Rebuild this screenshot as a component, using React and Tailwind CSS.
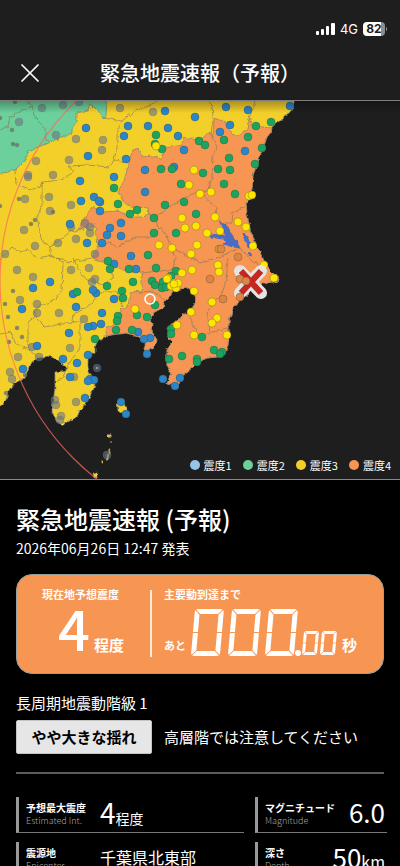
const LAND =
  "M-5 95 L293 95 L293 108 L289 113 L284 116 L283 119 L278 122 L272 127 L271 132 L267 137 L263 148 L258 162 L253 175 L252 188 L250 198 L246 203 L247 215 L250 228 L255 242 L262 257 L268 268 L275 275 L279 278 L278 283 L272 281 L263 283 L253 290 L240 300 L233 308 L229 320 L229 333 L228 345 L225 353 L217 357 L207 358 L198 362 L192 368 L185 373 L180 382 L177 387 L172 385 L167 384 L171 373 L167 367 L167 357 L167 350 L172 343 L168 337 L167 328 L173 323 L180 318 L187 312 L193 307 L197 300 L192 290 L185 287 L180 290 L173 290 L170 297 L165 302 L162 308 L153 313 L150 320 L153 325 L152 332 L157 340 L155 347 L150 348 L147 354 L144 349 L146 342 L138 337 L127 333 L110 335 L98 340 L95 347 L95 353 L88 358 L88 368 L95 385 L92 393 L87 402 L80 410 L77 417 L70 420 L63 425 L57 422 L52 413 L53 402 L55 388 L55 372 L67 370 L62 363 L55 358 L47 356 L38 358 L32 362 L28 370 L25 378 L18 382 L12 385 L8 392 L6 400 L-5 410 Z";

const GREEN_AREA =
  "M-5 95 L107 95 L106 118 L104 118 L97 110 L90 103 L88 110 L77 113 L77 123 L72 127 L72 133 L50 142 L43 145 L28 152 L25 160 L15 170 L-5 175 Z";

const ORANGE_AREA =
  "M133 150 L138 148 L143 157 L150 155 L157 157 L162 160 L165 148 L182 145 L183 137 L192 139 L200 140 L210 132 L213 137 L214 118 L225 122 L230 132 L237 137 L247 130 L249 118 L252 125 L262 127 L272 128 L271 132 L267 137 L263 148 L258 162 L253 175 L252 188 L250 198 L246 203 L247 215 L250 228 L255 242 L262 257 L268 268 L275 275 L279 278 L278 283 L272 281 L263 283 L253 290 L240 300 L233 308 L229 320 L229 333 L228 345 L225 353 L217 357 L207 358 L198 362 L192 368 L185 373 L180 382 L177 387 L172 385 L167 384 L171 373 L167 367 L167 350 L172 343 L168 337 L167 328 L173 323 L180 318 L187 312 L193 307 L197 300 L192 290 L185 287 L180 290 L173 290 L170 297 L165 302 L162 308 L153 313 L150 320 L153 325 L152 332 L157 340 L155 347 L150 348 L147 354 L144 349 L146 342 L138 337 L127 333 L110 335 L105 336 L107 327 L118 322 L120 310 L128 305 L130 295 L133 291 L142 292 L142 273 L130 272 L113 266 L103 262 L92 258 L97 248 L95 225 L87 228 L78 229 L85 218 L92 207 L103 212 L118 211 L130 217 L143 217 L149 215 L148 208 L133 207 L125 203 L118 192 L125 178 L128 165 Z";

const BORDERS = [
  "M0 130 L8 126 L10 117 L22 110 L32 107 L35 118 L45 128 L46 140 L50 142",
  "M32 107 L28 101",
  "M104 118 L122 121 L118 130 L118 142 L114 160 L128 162",
  "M122 121 L133 112 L150 105 L157 101",
  "M114 160 L110 167 L87 165 L68 166 L73 172 L62 180 L42 182 L40 187 L30 190 L16 185 L15 170",
  "M42 182 L42 205 L37 218 L42 242 L50 247 L70 232 L87 228",
  "M50 247 L50 256 L70 262 L92 258",
  "M0 260 L12 247 L20 252 L28 250 L37 258 L52 255 L63 262 L62 290 L55 300 L36 308 L35 317 L28 322 L28 348 L38 357",
  "M35 317 L45 327 L72 322 L80 322 L80 348 L68 365 L63 377 L55 382",
  "M72 322 L73 315 L90 305 L100 292 L117 292 L122 307",
  "M73 258 L80 272 L87 280 L103 285 L113 278 L108 266",
  "M0 334 L12 332 L15 343 L28 350",
  "M97 248 L110 243 L117 247 L137 237 L155 237 L158 228 L155 217 L148 213",
  "M155 217 L163 212 L180 200 L200 190 L207 192 L212 178 L213 155 L217 147 L211 135 L213 118 L212 105 L208 101",
  "M200 190 L210 203 L217 208 L215 218 L223 223 L232 223 L233 212 L246 207",
  "M158 228 L163 230 L170 243 L177 250 L185 255 L200 262 L217 258 L230 252 L240 248 L253 262 L267 270",
  "M170 243 L175 258 L173 270 L158 271 L142 273",
  "M228 257 L226 282 L222 293 L207 312 L210 333 L227 328 L230 333",
  "M190 317 L200 340 L210 333",
  "M140 292 L153 291 L165 300",
  "M249 118 L253 108 L255 101",
];

const BLUE = [
  [86, 128], [88, 156], [165, 111], [195, 117], [128, 126], [148, 126], [168, 128], [124, 136], [178, 136],
  [126, 159], [184, 150], [145, 170], [174, 167], [114, 177], [145, 192], [80, 181], [94, 197], [81, 201],
  [100, 202], [99, 201], [100, 211], [70, 224], [121, 223], [110, 228], [107, 235], [121, 236], [102, 243],
  [87, 243], [131, 256], [114, 264], [136, 269], [50, 282], [33, 288], [226, 107], [248, 110], [290, 106],
  [230, 125], [220, 132], [245, 151], [22, 309], [69, 333], [37, 346], [63, 359], [23, 369], [76, 307],
  [73, 294], [96, 293], [93, 290], [114, 299], [102, 313], [101, 324], [93, 326], [88, 327], [88, 355],
  [77, 363], [70, 377], [90, 379], [94, 380], [88, 381], [85, 398], [121, 402], [126, 414], [138, 332],
  [150, 338], [144, 339], [147, 354], [163, 379], [180, 378], [175, 386],
];

const GREEN = [
  [156, 135], [155, 144], [162, 149], [199, 141], [161, 169], [172, 169], [181, 184], [114, 188], [118, 204],
  [130, 214], [137, 210], [154, 218], [184, 202], [165, 205], [196, 214], [154, 233], [176, 233], [148, 255],
  [108, 261], [110, 269], [129, 269], [156, 268], [176, 271], [133, 282], [107, 286], [122, 291], [152, 281],
  [155, 285], [77, 292], [163, 285], [163, 282], [162, 288], [166, 287], [171, 276], [256, 126], [271, 122],
  [248, 137], [224, 140], [205, 145], [262, 148], [229, 158], [255, 164], [218, 169], [230, 170], [203, 173],
  [224, 184], [235, 194], [123, 298], [118, 316], [117, 321], [116, 330], [95, 339], [132, 330], [137, 315],
  [147, 317], [155, 305], [171, 329], [171, 334], [182, 356], [169, 359], [197, 359], [197, 362], [202, 337],
  [214, 350], [222, 352], [220, 354],
];

const YELLOW = [
  [156, 146], [194, 170], [189, 185], [200, 194], [182, 218], [185, 228], [196, 226], [159, 245], [172, 248],
  [197, 245], [191, 254], [192, 270], [182, 273], [168, 278], [171, 286], [176, 288], [174, 283], [178, 283],
  [167, 279], [174, 284], [194, 291], [211, 192], [249, 196], [252, 195], [215, 217], [238, 222], [246, 227],
  [220, 231], [207, 233], [253, 246], [264, 265], [274, 278], [218, 265], [219, 272], [135, 309], [191, 312],
  [177, 325], [212, 302], [217, 318], [212, 323], [194, 335], [227, 335],
];

const GRAY = [
  [42, 108], [63, 105], [79, 102], [120, 108], [153, 112], [19, 122], [56, 135], [76, 139], [103, 140],
  [102, 150], [36, 161], [69, 160], [28, 175], [28, 177], [53, 175], [49, 197], [25, 199], [50, 211],
  [71, 205], [24, 230], [71, 227], [85, 223], [90, 227], [90, 233], [76, 239], [58, 243], [35, 246],
  [95, 254], [5, 254], [17, 270], [33, 277], [71, 270], [89, 268], [95, 279], [92, 282], [20, 300],
  [37, 304], [37, 313], [59, 313], [84, 319], [32, 347], [39, 357], [70, 348], [18, 357], [10, 372],
  [12, 379], [74, 377], [55, 400], [56, 405], [76, 402], [61, 416], [60, 420], [107, 455],
];

const SMALL_GRAY = [
  [12, 130], [13, 144], [17, 145], [15, 102], [0, 118], [19, 199], [31, 224], [35, 220], [53, 212], [13, 291],
  [0, 206], [5, 304], [8, 317], [17, 328], [22, 337], [9, 342], [25, 375], [6, 393],
];

const ORANGE = [[221, 249], [210, 279], [238, 257], [240, 279], [246, 281], [240, 297], [223, 299]];

const LEGEND = [
  { label: "震度1", color: "bg-[#96c3e8]" },
  { label: "震度2", color: "bg-[#6bd09b]" },
  { label: "震度3", color: "bg-[#f3cf2a]" },
  { label: "震度4", color: "bg-[#f79552]" },
];

function Dots({ points, fill, r = 4, opacity = 1, stroke = "#3a4030" }) {
  return (
    <g fill={fill} fillOpacity={opacity} stroke={stroke} strokeOpacity={0.5} strokeWidth={0.6}>
      {points.map(([x, y], i) => (
        <circle key={i} cx={x} cy={y} r={r} />
      ))}
    </g>
  );
}

function StatusBar() {
  return (
    <div className="flex items-center justify-end gap-[5px] pr-[13px] pt-[19px]">
      <svg width="19" height="12" viewBox="0 0 19 12" fill="#fff" aria-hidden="true">
        <rect x="0" y="8" width="3" height="4" rx="1" />
        <rect x="5" y="6" width="3" height="6" rx="1" />
        <rect x="10" y="3" width="3" height="9" rx="1" />
        <rect x="15" y="0" width="4" height="12" rx="1" />
      </svg>
      <span className="font-['Inter',sans-serif] text-[13px] leading-5 text-white">4G</span>
      <span className="flex items-center gap-px">
        <span className="h-[14px] w-[22px] rounded-[4px] bg-[linear-gradient(90deg,#fff_82%,#8e8e8e_82%)] text-center font-['Inter',sans-serif] text-[12px] font-bold leading-[14px] text-[#1e1e1e]">
          82
        </span>
        <span className="h-1 w-px rounded-r bg-[#8e8e8e]" />
      </span>
    </div>
  );
}

function QuakeMap() {
  return (
    <svg viewBox="0 101 400 378" className="block w-full" role="img" aria-label="震度マップ">
      <defs>
        {/* roughens coast and borders */}
        <filter id="rough" x="-5%" y="-5%" width="110%" height="110%" colorInterpolationFilters="sRGB">
          <feTurbulence type="fractalNoise" baseFrequency="0.2" numOctaves="2" seed="4" />
          <feDisplacementMap in="SourceGraphic" scale="4" xChannelSelector="R" yChannelSelector="G" />
        </filter>
        <linearGradient id="shade" x1="0" y1="0" x2="0" y2="1">
          <stop offset="0" stopColor="#000" stopOpacity="0.3" />
          <stop offset="1" stopColor="#000" stopOpacity="0" />
        </linearGradient>
      </defs>
      <rect y="101" width="400" height="378" fill="#1e1e1e" />

      <g filter="url(#rough)" strokeLinejoin="round">
        <path d={LAND} fill="#f3cf2a" stroke="#8b8676" strokeWidth="0.8" />
        <path d={GREEN_AREA} fill="#6bd09b" stroke="#7d8a6c" strokeWidth="0.8" />
        <path d={ORANGE_AREA} fill="#f79552" stroke="#9a8468" strokeWidth="0.8" />
        <path
          d="M211 234 L226 236 L222 226 L219 221 L227 226 L232 234 L240 248 L233 247 L223 244 L227 240 L212 237 Z M243 232 L247 237 L252 248 L249 248 L244 238 Z"
          fill="#4a6cc4"
          stroke="#4a6cc4"
        />
        <circle cx="250" cy="254" r="2" fill="#4a6cc4" />
        <g fill="none" stroke="#8a7a58" strokeOpacity="0.85" strokeWidth="0.8">
          {BORDERS.map((d) => (
            <path key={d} d={d} />
          ))}
        </g>
        <g fill="#f3cf2a" stroke="#8b8676" strokeWidth="0.5">
          <path d="M117 402 L123 401 L128 413 L125 416 L118 411 Z" />
          <path d="M109 448 L110 450 L108 460 L106 459 Z" />
          <circle cx="109" cy="436" r="1.5" />
          <circle cx="111" cy="442" r="0.6" />
          <circle cx="102" cy="462" r="1.3" />
          <path d="M93 473 L97 472 L97 477 L94 478 Z" />
        </g>
      </g>

      <Dots points={GRAY} fill="#6b7580" opacity={0.6} stroke="#6b7580" />
      <Dots points={SMALL_GRAY} fill="#6b7060" r={2} opacity={0.8} stroke="#6b7580" />
      <Dots points={[[97, 368]]} fill="#46525e" stroke="#46525e" />
      <circle cx="97" cy="368" r="1.3" fill="#8b98a4" />
      <Dots points={BLUE} fill="#2a85c9" />
      <Dots points={GREEN} fill="#1aa45f" />
      <Dots points={[[219, 249]]} fill="#d9a514" />
      <Dots points={YELLOW} fill="#ffe500" />

      <circle cx="251" cy="281" r="251" fill="none" stroke="#ff6a62" strokeOpacity="0.75" strokeWidth="1.2" />
      <circle cx="150" cy="299" r="5" fill="none" stroke="#fff" strokeWidth="1.6" />

      <g fill="none">
        <path
          d="M240 271 L261 293 M261 271 L240 293"
          stroke="#e4e4e4"
          strokeWidth="12"
          strokeLinecap="round"
        />
        <path d="M239 270 L262 294 M262 270 L239 294" stroke="#e4e4e4" strokeWidth="11" />
        <path d="M241 271 L261 293 M261 271 L241 293" stroke="#c5261f" strokeWidth="6" />
      </g>
      <Dots points={ORANGE} fill="#dc8545" />
      <rect y="101" width="400" height="12" fill="url(#shade)" />
    </svg>
  );
}

// One lit zero: skewed frame with thin cuts between the segments
function ZeroDigit({ x, y, w, h, t, cut }) {
  return (
    <g transform={`translate(${x} ${y}) skewX(-5)`}>
      <rect x={t / 2} y={t / 2} width={w - t} height={h - t} rx="1" fill="none" stroke="#fff" strokeWidth={t} />
      <g stroke="#f79552" strokeWidth={cut}>
        <path
          d={`M0 0 L${t + 1} ${t + 1} M${w} 0 L${w - t - 1} ${t + 1} M0 ${h} L${t + 1} ${h - t - 1} M${w} ${h} L${w - t - 1} ${h - t - 1}`}
        />
        <path d={`M0 ${h / 2} H${t + 1} M${w} ${h / 2} H${w - t - 1}`} />
      </g>
    </g>
  );
}

function Countdown() {
  return (
    <svg width="146" height="48" viewBox="0 0 146 48" role="img" aria-label="000.00">
      {[4, 41, 78].map((x) => (
        <ZeroDigit key={x} x={x} y={0} w={29} h={47} t={5} cut={1} />
      ))}
      <circle cx="107" cy="44" r="3" fill="#fff" />
      {[113, 131].map((x) => (
        <ZeroDigit key={x} x={x} y={22} w={15} h={24} t={3} cut={0.7} />
      ))}
    </svg>
  );
}

function InfoRow({ label, sub, children, alignRight }) {
  return (
    <div className="flex h-9 items-stretch justify-between border-b border-l-[3px] border-b-[#777] border-l-[#999] pl-[7px]">
      <dt className="shrink-0 pt-1">
        <span className="block whitespace-nowrap text-[10px] font-bold leading-[14px]">{label}</span>
        <span className="block text-[9px] font-light leading-3 text-[#a8a8a8]">{sub}</span>
      </dt>
      <dd className={alignRight ? "whitespace-nowrap pr-0.5 leading-[30px]" : "w-[144px] whitespace-nowrap leading-[30px]"}>
        {children}
      </dd>
    </div>
  );
}

export default function App() {
  return (
    <div className="flex h-screen flex-col overflow-hidden bg-black font-['Noto_Sans_CJK_JP',sans-serif] text-white">
      <header className="h-[101px] shrink-0 border-b border-[#7d7d7d] bg-[#1e1e1e]">
        <StatusBar />
        <div className="relative mt-[18px] flex h-8 items-center justify-center">
          <button type="button" aria-label="閉じる" className="absolute left-5 flex size-5 items-center justify-center">
            <svg width="20" height="20" viewBox="0 0 20 20" stroke="#fff" strokeWidth="1.7" strokeLinecap="round">
              <path d="M2 2 L18 18 M18 2 L2 18" />
            </svg>
          </button>
          <h1 className="text-xl font-medium leading-8">緊急地震速報（予報）</h1>
        </div>
      </header>

      <section className="relative shrink-0 border-b border-[#8a8a8a]">
        <QuakeMap />
        <ul className="absolute bottom-1.5 right-[9px] flex gap-[11px]">
          {LEGEND.map((item) => (
            <li key={item.label} className="flex items-center gap-1 text-[11px] leading-4">
              <span className={`size-[10px] rounded-full ${item.color}`} />
              {item.label}
            </li>
          ))}
        </ul>
      </section>

      <main className="shrink-0 px-4 pt-[23px]">
        <h2 className="text-2xl font-medium leading-8">緊急地震速報 (予報)</h2>
        <p className="mt-px text-sm leading-6">2026年06月26日 12:47 発表</p>

        <section className="mt-[14px] flex h-[100px] rounded-2xl border border-[#93a09f] bg-[#f79552] pb-4 pt-[15px]">
          <div className="w-[133px] pl-[25px]">
            <h3 className="text-[11px] font-bold leading-2">現在地予想震度</h3>
            <p className="flex items-baseline gap-1 pl-4">
              <span className="text-[56px] font-medium leading-[58px]">4</span>
              <span className="text-[15px] font-bold">程度</span>
            </p>
          </div>
          <div className="flex-1 border-l-2 border-white/80 pl-3">
            <h3 className="text-[11px] font-bold leading-2">主要動到達まで</h3>
            <p className="mt-[11px] flex items-end gap-[5px] leading-4">
              <span className="pb-1 text-[11px] font-bold">あと</span>
              <Countdown />
              <span className="pb-1 text-[15px] font-bold">秒</span>
            </p>
          </div>
        </section>

        <p className="mt-[17px] text-[15px] leading-6">長周期地震動階級 1</p>
        <div className="mt-[5px] flex items-center gap-3">
          <button
            type="button"
            className="h-[34px] w-[136px] rounded-xs border border-[#c4c4c4] bg-[#e6e6e6] text-[15px] font-bold leading-7 text-black"
          >
            やや大きな揺れ
          </button>
          <p className="text-[15px] leading-6">高層階では注意してください</p>
        </div>
        <hr className="mt-[18px] border-t-2 border-[#5c5c5c]" />
      </main>

      <dl className="grid shrink-0 grid-cols-[1fr_132px] gap-x-[11px] gap-y-[9px] pl-4 pr-[13px] pt-[23px]">
        <InfoRow label="予想最大震度" sub="Estimated Int.">
          <span className="text-[28px]">4</span>
          <span className="text-sm leading-[30px]">程度</span>
        </InfoRow>
        <InfoRow label="マグニチュード" sub="Magnitude" alignRight>
          <span className="text-[26px]">6.0</span>
        </InfoRow>
        <InfoRow label="震源地" sub="Epicenter">
          <span className="text-base leading-[30px]">千葉県北東部</span>
        </InfoRow>
        <InfoRow label="深さ" sub="Depth" alignRight>
          <span className="text-[26px]">50</span>
          <span className="text-base leading-[30px]">km</span>
        </InfoRow>
      </dl>
    </div>
  );
}
